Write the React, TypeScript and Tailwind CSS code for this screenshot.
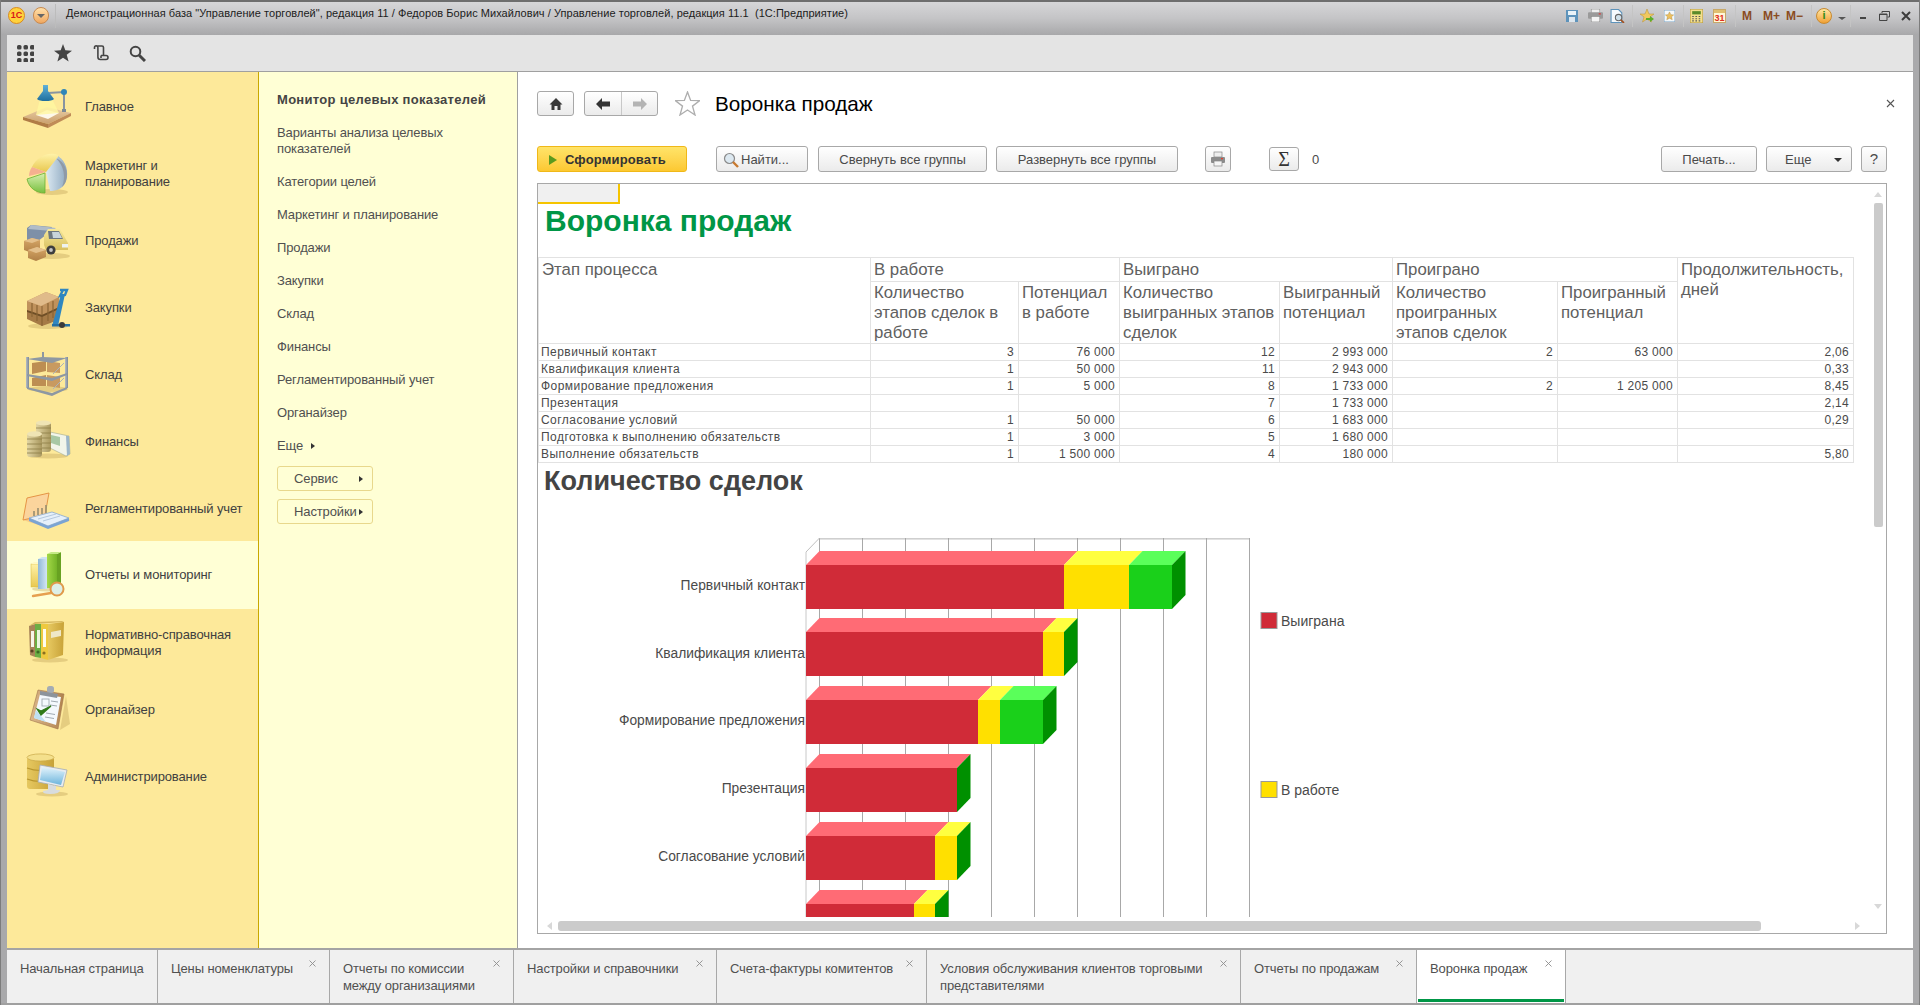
import React from "react";

const F = "font-['Liberation_Sans',Arial,sans-serif]";

function Defs() {
  const g = (id: string, a: string, b: string, h = false) => (
    <linearGradient id={id} x1="0" y1="0" x2={h ? "1" : "0"} y2={h ? "0" : "1"}>
      <stop offset="0" stopColor={a} />
      <stop offset="1" stopColor={b} />
    </linearGradient>
  );
  return (
    <svg width="0" height="0" className="absolute">
      <defs>
        {g("tan", "#ecd0a6", "#c99f6e")}
        {g("blue", "#5fb0d8", "#1f6f9e")}
        {g("blueH", "#8fb8d8", "#d4e6f2", true)}
        {g("pieB", "#dce9f2", "#8ea9c0", true)}
        {g("yel", "#fff2a8", "#e8c850")}
        {g("gold", "#e6c860", "#c8a238", true)}
        {g("grn", "#a4d848", "#74b428", true)}
        {g("pieG", "#d8f0b0", "#78c040", false)}
        {g("steel", "#b4bcc6", "#7d8894", true)}
        {g("box", "#d8a868", "#b08046")}
        {g("scr", "#e4f4fc", "#6cb4dc")}
        {g("coin", "#e2d6a4", "#a8975e", true)}
        {g("wood", "#dcb88c", "#b0824e", true)}
        {g("cab", "#f6e89a", "#d8c060")}
        {g("glass", "#fbf0b0", "#fde99a")}
      </defs>
    </svg>
  );
}

const Ic = ({ children }: { children: React.ReactNode }) => (
  <svg viewBox="0 0 50 48" className="w-[50px] h-[48px] shrink-0">{children}</svg>
);

const Sh = ({ cx, cy, rx, ry }: { cx: number; cy: number; rx: number; ry: number }) => (
  <ellipse cx={cx} cy={cy} rx={rx} ry={ry} fill="#b89c50" opacity="0.35" />
);

const icons: React.ReactNode[] = [
  <Ic key="0">
    <polygon points="1,34 25,24 49,30 26,41" fill="url(#tan)" />
    <polygon points="1,34 26,41 26,45 1,37" fill="#b07c46" />
    <polygon points="49,30 26,41 26,45 49,33" fill="#c08c58" />
    <polygon points="14,32 25,27 37,30 26,36" fill="#fdf8ea" />
    <polygon points="18,16 30,16 37,30 14,32" fill="#fff7a0" opacity="0.8" />
    <path d="M26 10 L42 9 L42 27" stroke="#8894a0" strokeWidth="2" fill="none" />
    <circle cx="42" cy="9" r="3" fill="#2f86b8" />
    <rect x="40" y="26" width="4" height="3" fill="#7e8a94" />
    <path d="M21 2 h5 v6 l6 8 a9 3 0 0 1 -17 0 l6 -8z" fill="url(#blue)" />
  </Ic>,
  <Ic key="1">
    <Sh cx={30} cy={42} rx={16} ry={3} />
    <path d="M24 22 L36 6 C 44 11 47 22 44 31 C 41 39 34 41 28 41 Z" fill="url(#pieB)" />
    <path d="M34 8 C 43 12 47 22 44 31 C 43 34 41 36 40 37 C 44 27 42 16 34 8Z" fill="#8f9aa6" />
    <path d="M24 22 L10 17 C 14 8 26 1 36 5 L 36 7 Z" fill="url(#yel)" />
    <path d="M24 22 L10 17 C 8 20 7 23 7 26 Z" fill="#f5b090" />
    <path d="M5 29 L23 23 L23 43 C 14 43 7 38 5 29 Z" fill="url(#pieG)" stroke="#6ab030" strokeWidth="0.8" />
  </Ic>,
  <Ic key="2">
    <Sh cx={30} cy={39} rx={18} ry={3} />
    <polygon points="5,11 9,8 30,10 28,15 8,30 5,28" fill="#7e90a8" />
    <polygon points="9,8 34,11 30,14 6,12" fill="#b0bcc8" />
    <path d="M22 18 L26 12 H38 L46 26 V33 H24 L22 28z" fill="url(#cab)" />
    <polygon points="26,14 37,14 41,22 27,22" fill="#6d7880" />
    <polygon points="30,15 37,15 40,21 31,21" fill="#c8d4da" />
    <rect x="40" y="27" width="6" height="3.5" fill="#eef2f0" />
    <circle cx="29" cy="33" r="4.6" fill="#3e3e3e" />
    <circle cx="29" cy="33" r="1.9" fill="#c4c4c4" />
    <polygon points="2,24 10,21 18,23 18,32 10,36 2,33" fill="url(#box)" />
    <polygon points="2,24 10,21 18,23 10,26" fill="#e4c08c" />
    <polygon points="6,33 15,30 24,33 24,40 14,44 6,41" fill="url(#box)" />
    <polygon points="6,33 15,30 24,33 14,36" fill="#e4c08c" />
  </Ic>,
  <Ic key="3">
    <Sh cx={26} cy={42} rx={20} ry={3} />
    <polygon points="5,17 24,8 37,13 37,26 20,34 5,27" fill="#c0925c" />
    <polygon points="5,17 24,8 37,13 19,22" fill="#e0bb8a" />
    <polygon points="5,27 19,31 37,24 37,36 20,42 5,35" fill="#a57a46" />
    <polygon points="5,26 20,31 37,23 37,25 20,33 5,28" fill="#6e4e26" />
    <path d="M10 19 v14 M15 21 v16 M26 19 v18 M31 17 v17" stroke="#8a6434" strokeWidth="1.2" />
    <path d="M20 22 v20" stroke="#7a5528" strokeWidth="0.8" />
    <path d="M38 6 H45 L43 11 L38 12 L41 6" fill="none" stroke="#2f86c0" strokeWidth="2.4" />
    <polygon points="39,10 43,10 36,42 30,42" fill="#2f86c0" />
    <rect x="30" y="40" width="18" height="2.5" fill="#2570a4" />
    <circle cx="40" cy="41" r="3" fill="#3a3a3a" />
  </Ic>,
  <Ic key="4">
    <Sh cx={26} cy={38} rx={20} ry={3} />
    <polygon points="10,12 24,10 24,20 10,23" fill="#bd8e52" />
    <polygon points="25,10 38,12 38,22 25,21" fill="#c89a60" />
    <polygon points="10,27 24,24 24,35 10,35" fill="#bd8e52" />
    <polygon points="25,24 38,26 38,37 25,35" fill="#c89a60" />
    <rect x="4" y="6" width="3" height="31" fill="url(#steel)" />
    <rect x="43" y="6" width="3" height="31" fill="url(#steel)" />
    <rect x="20" y="1" width="2" height="6" fill="#8d97a2" />
    <polygon points="5,8 20,6 45,7 30,12" fill="#8e98a2" />
    <polygon points="5,23 30,27 45,22 45,24 30,30 5,25" fill="#8e98a2" />
    <polygon points="5,36 30,42 45,36 45,38 30,45 5,38" fill="#8e98a2" />
    <path d="M31 23 L42 12 M31 38 L42 27" stroke="#aab2ba" strokeWidth="1" />
  </Ic>,
  <Ic key="5">
    <Sh cx={26} cy={38} rx={20} ry={2.5} />
    <polygon points="28,14 47,18 48,36 44,38 28,30" fill="#f2f5ea" stroke="#a0a88c" strokeWidth="0.6" />
    <polygon points="29,17 38,19 38,28 29,25" fill="#a8c8a4" />
    <polygon points="44,18 47,18 48,36 45,38" fill="#9cb6c8" />
    <rect x="14" y="4" width="15" height="30" rx="3" fill="url(#coin)" />
    <path d="M14 10 h15 M14 15 h15 M14 20 h15 M14 25 h15 M14 30 h15" stroke="#8e7e48" strokeWidth="0.8" />
    <ellipse cx="21.5" cy="5" rx="7.5" ry="2.6" fill="#efe4b4" />
    <rect x="5" y="15" width="15" height="24" rx="3" fill="url(#coin)" />
    <path d="M5 21 h15 M5 26 h15 M5 31 h15 M5 35 h15" stroke="#8e7e48" strokeWidth="0.8" />
    <ellipse cx="12.5" cy="16" rx="7.5" ry="2.8" fill="#efe4b4" />
  </Ic>,
  <Ic key="6">
    <polygon points="1,35 24,30 49,35 26,43" fill="#f6c684" opacity="0.9" />
    <polygon points="5,13 27,8 23,30 1,35" fill="#fbd49c" stroke="#e59445" strokeWidth="1" />
    <polygon points="7,33 30,27 47,33 26,41" fill="#e6f0fa" stroke="#88aad0" strokeWidth="0.8" />
    <polygon points="7,33 26,41 47,33 47,36 26,44 7,36" fill="#7aa4d4" />
    <path d="M12 31 v-5 M16 30 v-7 M20 29 v-6 M24 28 v-8" stroke="#9e9272" strokeWidth="1.7" />
    <path d="M16 34 L34 29 M21 36 L38 31" stroke="#b4c8de" strokeWidth="1" />
  </Ic>,
  <Ic key="7">
    <Sh cx={26} cy={38} rx={16} ry={2.5} />
    <rect x="9" y="13" width="8" height="23" fill="url(#yel)" stroke="#d8b840" strokeWidth="0.5" />
    <polygon points="9,13 12,11 20,11 17,13" fill="#fff8c4" />
    <rect x="16" y="8" width="9" height="30" fill="url(#blueH)" />
    <polygon points="16,8 20,6 29,6 25,8" fill="#cfe4f2" />
    <rect x="25" y="3" width="10" height="34" fill="url(#grn)" />
    <polygon points="35,3 39,1 39,33 35,36" fill="#68a222" />
    <polygon points="25,3 29,1 39,1 35,3" fill="#c4ea84" />
    <path d="M29 42 L11 45" stroke="#e6a050" strokeWidth="2.4" strokeLinecap="round" />
    <circle cx="35" cy="38" r="6.5" fill="#dcefe6" stroke="#e09a4a" strokeWidth="2" />
  </Ic>,
  <Ic key="8">
    <Sh cx={28} cy={41} rx={18} ry={2.5} />
    <polygon points="7,7 13,5 13,38 8,36" fill="#a88458" />
    <rect x="9" y="12" width="3" height="16" fill="#f8f6ea" />
    <polygon points="13,5 19,5 19,39 13,38" fill="#6cae44" />
    <rect x="15" y="11" width="3" height="18" fill="#eaf6de" />
    <polygon points="19,5 26,5 26,41 19,39" fill="#eec93f" />
    <rect x="21" y="10" width="3" height="18" fill="#fffdf0" />
    <polygon points="26,5 42,3 41,36 26,41" fill="url(#gold)" />
    <polygon points="7,7 13,5 42,3 40,2 13,3" fill="#d6b860" />
    <polygon points="29,13 39,11 39,17 29,19" fill="#efe8c8" />
    <circle cx="10" cy="32" r="1.6" fill="#5a4020" />
    <circle cx="16" cy="33" r="1.6" fill="#3c6a24" />
    <circle cx="22" cy="34" r="1.6" fill="#8a7020" />
  </Ic>,
  <Ic key="9">
    <polygon points="38,44 44,10 48,38" fill="#b89c50" opacity="0.35" />
    <polygon points="16,4 42,8 36,43 8,34" fill="url(#wood)" stroke="#a0744a" strokeWidth="0.6" />
    <polygon points="18,8 39,11 34,39 12,32" fill="#f4f9fd" />
    <polygon points="12,32 24,36 14,24" fill="#bfe0f2" />
    <rect x="25" y="0" width="7" height="7" rx="2.5" fill="#a4acb4" />
    <polygon points="18,5 36,8 35,12 18,9" fill="#8c949c" />
    <rect x="20" y="13" width="7" height="7" fill="none" stroke="#a0aab2" strokeWidth="0.9" />
    <path d="M29 15 l7 1 M28 19 l7 1 M24 27 l9 1.5 M23 31 l9 1.5" stroke="#a0aab2" strokeWidth="1" />
    <path d="M15 23 L19 29 L29 20 L19 25z" fill="#2f7a18" stroke="#2f7a18" strokeWidth="1.2" />
  </Ic>,
  <Ic key="10">
    <Sh cx={30} cy={41} rx={16} ry={2.5} />
    <rect x="5" y="4" width="27" height="32" rx="3" fill="url(#gold)" />
    <ellipse cx="18.5" cy="4.5" rx="13.5" ry="3.6" fill="#f4e08c" stroke="#c8a848" strokeWidth="0.7" />
    <path d="M5 15 q13 5 27 0 M5 26 q13 5 27 0" stroke="#b8962e" strokeWidth="1.1" fill="none" />
    <polygon points="18,12 45,17 41,34 16,29" fill="#e8ecf0" stroke="#a4acb2" strokeWidth="0.8" />
    <polygon points="20,14 43,19 39,32 18,27" fill="url(#scr)" />
    <path d="M26 31 L34 33 L34 37 H38 Q38 41 28 41 Q20 41 21 38 L26 37z" fill="#d8dcde" />
  </Ic>,
];

const sections: [string, boolean?][] = [
  ["Главное"],
  ["Маркетинг и\nпланирование"],
  ["Продажи"],
  ["Закупки"],
  ["Склад"],
  ["Финансы"],
  ["Регламентированный учет"],
  ["Отчеты и мониторинг", true],
  ["Нормативно-справочная\nинформация"],
  ["Органайзер"],
  ["Администрирование"],
];

const sub = [
  "Варианты анализа целевых\nпоказателей",
  "Категории целей",
  "Маркетинг и планирование",
  "Продажи",
  "Закупки",
  "Склад",
  "Финансы",
  "Регламентированный учет",
  "Органайзер",
];

const Tri = () => <span className="inline-block w-0 h-0 border-y-[3.5px] border-y-transparent border-l-[4px] border-l-[#333]" />;

const btn = "flex items-center justify-center rounded-[3px] border border-[#a8a8a8] bg-linear-to-b from-white to-[#ebebeb] text-[13px] text-[#4a4a4a] shrink-0";

function TitleIcons() {
  const Sep = ({ ml }: { ml: string }) => <span className={"w-px h-[22px] bg-[#c4c4c4] shrink-0 " + ml} />;
  const M = "text-[12px] font-bold text-[#8a4c22] leading-none";
  return (
    <div className="flex items-center h-[27px] absolute left-[1565px] top-0">
      <svg viewBox="0 0 12 12" className="w-[12px] h-[12px]"><rect width="12" height="12" fill="#5d93bb" /><rect x="2" y="1" width="8" height="4" fill="#e8f2f8" /><rect x="3" y="7" width="6" height="5" fill="#dce6ee" /></svg>
      <svg viewBox="0 0 14 12" className="w-[15px] h-[13px] ml-[10px]"><rect x="3" width="8" height="4" fill="#eee" stroke="#888" strokeWidth=".5" /><rect y="3" width="14" height="6" rx="1" fill="#9a9a9a" /><rect x="3" y="7" width="8" height="5" fill="#f4f4f4" stroke="#888" strokeWidth=".5" /><rect x="10" y="4" width="2" height="1" fill="#e03030" /></svg>
      <svg viewBox="0 0 14 13" className="w-[15px] h-[14px] ml-[7px]"><path d="M1 .5 h7 l3 3 v9 H1z" fill="#f6fafd" stroke="#5d93bb" /><circle cx="8" cy="8" r="3" fill="#cfe0ea" stroke="#666" /><path d="M10 10 l3 3" stroke="#a05020" strokeWidth="1.6" /></svg>
      <Sep ml="ml-[7px]" />
      <svg viewBox="0 0 14 14" className="w-[14px] h-[14px] ml-[7px]"><polygon points="7,0 9,5 14,5 10,8 11.5,13 7,10 2.5,13 4,8 0,5 5,5" fill="#f0c860" stroke="#b89030" strokeWidth=".5" /><path d="M6 9 h4 v-2 l4 3 -4 3 v-2 H6z" fill="#5cae28" /></svg>
      <svg viewBox="0 0 12 13" className="w-[11px] h-[12px] ml-[10px]"><rect width="12" height="13" fill="#f4f8fb" stroke="#7aa4c4" /><polygon points="6,2 7.5,5 10.5,5.3 8.2,7.4 9,10.5 6,9 3,10.5 3.8,7.4 1.5,5.3 4.5,5" fill="#ecc060" stroke="#a07a28" strokeWidth=".4" /></svg>
      <Sep ml="ml-[8px]" />
      <svg viewBox="0 0 12 13" className="w-[13px] h-[14px] ml-[6px]"><rect width="12" height="13" fill="#f4e08c" stroke="#b89a40" /><rect x="2" y="2" width="8" height="3" fill="#5a8a2a" /><path d="M2 7 h1.5 M5 7 h1.5 M8 7 h1.5 M2 9 h1.5 M5 9 h1.5 M8 9 h1.5 M2 11 h1.5 M5 11 h1.5 M8 11 h1.5" stroke="#5a5a5a" strokeWidth="1" /></svg>
      <span className="relative w-[13px] h-[14px] ml-[10px] border border-[#c8a868] bg-[#fff8d8] text-[9px] leading-[16px] text-center text-[#e03020] font-bold"><span className="absolute inset-x-0 top-0 h-[3px] bg-[#e0c070]" />31</span>
      <Sep ml="ml-[9px]" />
      <span className={M + " ml-[6px]"}>M</span>
      <span className={M + " ml-[11px]"}>M+</span>
      <span className={M + " ml-[6px]"}>M−</span>
      <Sep ml="ml-[8px]" />
      <span className="ml-[4px] w-[16px] h-[16px] rounded-full bg-linear-to-b from-[#ffe7a0] to-[#f0a030] border border-[#c88a30] flex items-center justify-center text-[11px] font-bold text-[#2f8a18] leading-none">i</span>
      <span className="w-0 h-0 border-x-[4px] border-x-transparent border-t-[3px] border-t-[#555] mt-[6px] ml-[6px]" />
      <Sep ml="ml-[4px]" />
      <span className="w-[6px] h-[2px] bg-[#444] mt-[5px] ml-[9px]" />
      <svg viewBox="0 0 11 10" className="w-[11px] h-[10px] ml-[13px]"><path d="M3 2 V.5 H10.5 V6 H8.5 M.5 3 H8 V9.5 H.5z M.5 3.5 H8" fill="none" stroke="#444" /></svg>
      <svg viewBox="0 0 10 10" className="w-[10px] h-[10px] ml-[11px]"><path d="M1 1 L9 9 M9 1 L1 9" stroke="#3c3c3c" strokeWidth="2" /></svg>
    </div>
  );
}

const rows: (string | number)[][] = [
  ["Первичный контакт", 3, "76 000", 12, "2 993 000", 2, "63 000", "2,06"],
  ["Квалификация клиента", 1, "50 000", 11, "2 943 000", "", "", "0,33"],
  ["Формирование предложения", 1, "5 000", 8, "1 733 000", 2, "1 205 000", "8,45"],
  ["Презентация", "", "", 7, "1 733 000", "", "", "2,14"],
  ["Согласование условий", 1, "50 000", 6, "1 683 000", "", "", "0,29"],
  ["Подготовка к выполнению обязательств", 1, "3 000", 5, "1 680 000", "", "", ""],
  ["Выполнение обязательств", 1, "1 500 000", 4, "180 000", "", "", "5,80"],
];

const th = "border border-[#e2e2e2] align-top font-normal text-left pl-[3px] pr-[1px] text-[16.8px] leading-[20px] text-[#606060] overflow-hidden whitespace-pre-line";

function Table() {
  return (
    <table className="table-fixed border-collapse w-[1315px] shrink-0">
      <colgroup>
        {[332, 148, 101, 160, 113, 165, 120, 176].map((w, i) => <col key={i} style={{ width: w }} />)}
      </colgroup>
      <thead>
        <tr className="h-[24px]">
          <th rowSpan={2} className={th + " pt-[2px]"}>Этап процесса</th>
          <th colSpan={2} className={th + " pt-[2px]"}>В работе</th>
          <th colSpan={2} className={th + " pt-[2px]"}>Выиграно</th>
          <th colSpan={2} className={th + " pt-[2px]"}>Проиграно</th>
          <th rowSpan={2} className={th + " pt-[2px]"}>{"Продолжительность,\nдней"}</th>
        </tr>
        <tr className="h-[62px]">
          <th className={th + " pt-[1px]"}>{"Количество\nэтапов сделок в\nработе"}</th>
          <th className={th + " pt-[1px]"}>{"Потенциал\nв работе"}</th>
          <th className={th + " pt-[1px]"}>{"Количество\nвыигранных этапов\nсделок"}</th>
          <th className={th + " pt-[1px]"}>{"Выигранный\nпотенциал"}</th>
          <th className={th + " pt-[1px]"}>{"Количество\nпроигранных\nэтапов сделок"}</th>
          <th className={th + " pt-[1px]"}>{"Проигранный\nпотенциал"}</th>
        </tr>
      </thead>
      <tbody>
        {rows.map((r, i) => (
          <tr key={i} className="h-[17px]">
            {r.map((c, j) => (
              <td key={j} className={"border border-[#e2e2e2] p-0 text-[12px] leading-[14px] text-[#4a4a4a] whitespace-nowrap " + (j === 0 ? "pl-[2px] text-left tracking-[0.45px]" : "pr-[4px] text-right tracking-[0.3px]")}>{c}</td>
            ))}
          </tr>
        ))}
      </tbody>
    </table>
  );
}

const R: [string, string] = ["#d02b38", "#ff6b75"];
const Y: [string, string] = ["#ffe000", "#ffff40"];
const G: [string, string] = ["#1ad01a", "#5aff5a"];

const bars: { y: number; segs: [number, [string, string]][] }[] = [
  { y: 565, segs: [[1064, R], [1129, Y], [1172, G]] },
  { y: 632, segs: [[1043, R], [1064, Y]] },
  { y: 700, segs: [[978, R], [1000, Y], [1043, G]] },
  { y: 768, segs: [[957, R]] },
  { y: 836, segs: [[935, R], [957, Y]] },
  { y: 904, segs: [[914, R], [935, Y]] },
];

function Chart() {
  const dx = 13.5, dy = 14, L = 806, H = 44;
  const labels: [string, number][] = [["Первичный контакт", 585], ["Квалификация клиента", 653], ["Формирование предложения", 720], ["Презентация", 788], ["Согласование условий", 856]];
  return (
    <svg viewBox="538 501 1330 416" className="w-[1330px] h-[416px] shrink-0 block">
      <rect x="819.5" y="538.5" width="430" height="0.8" fill="#a0a0a0" />
      {Array.from({ length: 11 }, (_, i) => (
        <line key={i} x1={819.5 + 43 * i} y1="538" x2={819.5 + 43 * i} y2="917" stroke="#a8a8a8" strokeWidth="1" />
      ))}
      <line x1="806" y1="552" x2="806" y2="917" stroke="#c8c8c8" />
      <line x1="806" y1="552" x2="819.5" y2="538" stroke="#c0c0c0" />
      {bars.map((b, i) => {
        let x = L;
        const bottom = b.y + H;
        const end = b.segs[b.segs.length - 1][0];
        return (
          <g key={i}>
            {b.segs.map(([e, c], k) => {
              const s = x; x = e;
              return (
                <g key={k}>
                  <rect x={s} y={b.y} width={e - s} height={H} fill={c[0]} />
                  <polygon points={`${s},${b.y} ${e},${b.y} ${e + dx},${b.y - dy} ${s + dx},${b.y - dy}`} fill={c[1]} />
                </g>
              );
            })}
            <polygon points={`${end},${b.y} ${end + dx},${b.y - dy} ${end + dx},${bottom - dy} ${end},${bottom}`} fill="#009000" />
          </g>
        );
      })}
      {labels.map(([t, y]) => (
        <text key={t} x="805" y={y + 5} textAnchor="end" fontSize="13.8" fill="#4a4a4a" fontFamily="Liberation Sans">{t}</text>
      ))}
      <rect x="1261" y="612.5" width="16" height="16" fill="#d02b38" stroke="#999" />
      <text x="1281" y="626" fontSize="14" fill="#4a4a4a" fontFamily="Liberation Sans">Выиграна</text>
      <rect x="1261" y="781.5" width="16" height="16" fill="#ffe000" stroke="#999" />
      <text x="1281" y="795" fontSize="14" fill="#4a4a4a" fontFamily="Liberation Sans">В работе</text>
    </svg>
  );
}

const tabs: [string, number, boolean, boolean?][] = [
  ["Начальная страница", 151, false],
  ["Цены номенклатуры", 172, true],
  ["Отчеты по комиссии\nмежду организациями", 184, true],
  ["Настройки и справочники", 203, true],
  ["Счета-фактуры комитентов", 210, true],
  ["Условия обслуживания клиентов торговыми\nпредставителями", 314, true],
  ["Отчеты по продажам", 176, true],
  ["Воронка продаж", 149, true, true],
];

const txt = "text-[13px] leading-[16px] tracking-[-0.12px]";

export default function App() {
  return (
    <div className={"w-[1920px] h-[1005px] overflow-hidden bg-[#a9a9ab] flex flex-col relative border-x border-[#7c7c7c] " + F}>
      <Defs />
      <div className="relative h-[35px] shrink-0 border-t-2 border-[#6e6e6e] bg-linear-to-b from-[#d6d6d8] via-[#c4c4c6] to-[#a8a8aa] flex items-center">
        <span className="absolute left-[7px] top-[5px] w-[17px] h-[17px] rounded-full bg-[#ffd23c] border border-[#d88a20] flex items-center justify-center text-[9px] font-bold text-[#d81818] leading-none">1С</span>
        <span className="absolute left-[32px] top-[5px] w-[16px] h-[17px] rounded-full bg-linear-to-b from-[#ffe0a8] to-[#f0a860] border border-[#c88a50] flex items-center justify-center">
          <span className="w-0 h-0 border-x-[4px] border-x-transparent border-t-[4px] border-t-[#666]" />
        </span>
        <span className="absolute left-[54px] top-[2px] w-px h-[24px] bg-[#bcbcbc]" />
        <span className="absolute left-[65px] top-[2px] text-[11px] tracking-[0.05px] leading-[18px] text-[#1c1c1c] whitespace-pre">Демонстрационная база "Управление торговлей", редакция 11 / Федоров Борис Михайлович / Управление торговлей, редакция 11.1  (1С:Предприятие)</span>
        <TitleIcons />
      </div>
      <div className="flex-1 mx-[6px] min-h-0 flex flex-col">
        <div className="h-[37px] shrink-0 bg-[#e4e4e4] border-b border-[#a0a0a0] flex items-center pl-[10px]">
          <svg viewBox="0 0 17 17" className="w-[17px] h-[17px] mr-[20px]">
            {[0, 6.5, 13].flatMap((x) => [0, 6.5, 13].map((y) => <rect key={x + "-" + y} x={x} y={y} width="4.5" height="4.5" rx="1.6" fill="#444" />))}
          </svg>
          <svg viewBox="0 0 17 17" className="w-[18px] h-[18px] mr-[20px]"><polygon points="8.5,0 10.7,6 17,6.3 12,10.2 13.8,16.5 8.5,13 3.2,16.5 5,10.2 0,6.3 6.3,6" fill="#444" /></svg>
          <svg viewBox="0 0 17 17" className="w-[17px] h-[17px] mr-[20px]"><path d="M2.5 4 V2.5 a1.7 1.7 0 0 1 3.4 0 V12 a2.5 2.5 0 0 0 2.5 2.5 H14 a2 2 0 0 0 0 -4 H9 M3 1 H10 a1.5 1.5 0 0 1 1.5 1.5 V10 M9 10.5 V13" fill="none" stroke="#444" strokeWidth="1.6" /></svg>
          <svg viewBox="0 0 17 17" className="w-[17px] h-[17px]"><circle cx="6.5" cy="6.5" r="4.8" fill="none" stroke="#444" strokeWidth="2" /><path d="M10.2 10.2 L16 16" stroke="#444" strokeWidth="3" /></svg>
        </div>
        <div className="flex-1 min-h-0 flex">
          <div className="w-[252px] shrink-0 bg-[#fde99a] border-r border-[#c9a800] pt-[1px]">
            {sections.map(([t, active], i) => (
              <div key={i} className={"flex items-center pl-[15px] gap-[13px] text-[#404040] whitespace-pre-line " + txt + " " + (active ? "bg-[#ffffd5] h-[68px] -mt-px" : "h-[67px]")}>
                {icons[i]}
                <span>{t}</span>
              </div>
            ))}
          </div>
          <div className={"w-[259px] shrink-0 bg-[#ffffd5] border-r border-[#a0a0a0] pl-[18px] pt-[11px] text-[#505050] " + txt}>
            <div className="pt-[9px] h-[33px] font-bold text-[#444] tracking-[0.3px]">Монитор целевых показателей</div>
            {sub.map((t, i) => <div key={i} className="py-[8.5px] whitespace-pre-line">{t}</div>)}
            <div className="py-[8.5px] flex items-center gap-[8px]">Еще <Tri /></div>
            <div className="mt-[4px] w-[96px] h-[25px] rounded-[3px] border border-[#e8d88c] flex items-center justify-between pl-[16px] pr-[9px]">Сервис <Tri /></div>
            <div className="mt-[8px] w-[96px] h-[25px] rounded-[3px] border border-[#e8d88c] flex items-center justify-between pl-[16px] pr-[9px]">Настройки <Tri /></div>
          </div>
          <div className="flex-1 min-w-0 bg-white pl-[19px] pt-[19px] relative">
            <div className="h-[25px] flex items-center">
              <div className={btn + " w-[37px] h-[25px]"}>
                <svg viewBox="0 0 14 14" className="w-[14px] h-[14px]"><path d="M7 1 L0.5 7.5 H2.5 V13 H5.5 V9 H8.5 V13 H11.5 V7.5 H13.5z" fill="#3a3a3a" /></svg>
              </div>
              <div className={btn + " w-[74px] h-[25px] ml-[10px] !justify-start"}>
                <div className="w-[37px] h-full flex items-center justify-center border-r border-[#c8c8c8]">
                  <svg viewBox="0 0 14 12" className="w-[14px] h-[12px]"><path d="M0 6 L6 0 V3.5 H14 V8.5 H6 V12z" fill="#333" /></svg>
                </div>
                <div className="flex-1 flex items-center justify-center">
                  <svg viewBox="0 0 14 12" className="w-[14px] h-[12px]"><path d="M14 6 L8 0 V3.5 H0 V8.5 H8 V12z" fill="#b4b4b4" /></svg>
                </div>
              </div>
              <svg viewBox="0 0 24 24" className="w-[25px] h-[25px] ml-[17px]"><polygon points="12,1 15,9 23.5,9.3 16.8,14.5 19.2,23 12,18.2 4.8,23 7.2,14.5 0.5,9.3 9,9" fill="#fff" stroke="#aeaeae" strokeWidth="1.3" /></svg>
              <span className="ml-[15px] text-[20.7px] leading-[27px] text-black">Воронка продаж</span>
              <svg viewBox="0 0 9 9" className="absolute right-[18px] top-[27px] w-[9px] h-[9px]"><path d="M1 1 L8 8 M8 1 L1 8" stroke="#555" strokeWidth="1.1" /></svg>
            </div>
            <div className="mt-[30px] h-[26px] flex items-center text-[13px]">
              <div className="w-[150px] h-[26px] rounded-[3px] border border-[#f0b818] bg-linear-to-b from-[#ffe468] to-[#fcc830] flex items-center pl-[11px] pt-px font-bold text-[#333] text-[13px] tracking-[0.15px] shrink-0">
                <span className="w-0 h-0 border-y-[5px] border-y-transparent border-l-[8px] border-l-[#5a9a1e] mr-[8px]" />Сформировать
              </div>
              <div className={btn + " w-[92px] h-[26px] ml-[29px] !justify-start pl-[6px] pt-px"}>
                <svg viewBox="0 0 16 16" className="w-[16px] h-[16px] mr-[2px]"><circle cx="6.5" cy="6.5" r="5" fill="#dce8f0" stroke="#8a8a8a" strokeWidth="1.2" /><path d="M10 10 L15 15" stroke="#c87a30" strokeWidth="2.4" /></svg>
                Найти...
              </div>
              <div className={btn + " w-[169px] h-[26px] ml-[10px] pt-px"}>Свернуть все группы</div>
              <div className={btn + " w-[182px] h-[26px] ml-[9px] pt-px"}>Развернуть все группы</div>
              <div className={btn + " w-[26px] h-[26px] ml-[27px]"}>
                <svg viewBox="0 0 16 16" className="w-[16px] h-[16px]"><rect x="4" y="1" width="8" height="5" fill="#eee" stroke="#888" strokeWidth=".7" /><rect x="1" y="6" width="14" height="6" rx="1" fill="#8c8c8c" /><rect x="4" y="10" width="8" height="5" fill="#f6f6f6" stroke="#888" strokeWidth=".7" /><rect x="11" y="7" width="2" height="1.3" fill="#e04030" /></svg>
              </div>
              <div className={btn + " w-[30px] h-[24px] ml-[38px] !text-[20px] !text-[#333] font-['Liberation_Serif',serif]"}>Σ</div>
              <span className="ml-[13px] pt-px text-[13px] text-[#4a4a4a]">0</span>
              <div className="flex-1" />
              <div className={btn + " w-[96px] h-[26px] pt-px"}>Печать...</div>
              <div className={btn + " w-[86px] h-[26px] ml-[9px] !justify-start pl-[18px] pt-px"}>Еще<span className="ml-[23px] w-0 h-0 border-x-[4px] border-x-transparent border-t-[4px] border-t-[#333]" /></div>
              <div className={btn + " w-[26px] h-[26px] ml-[9px] mr-[26px] !text-[15px]"}>?</div>
            </div>
            <div className="mt-[11px] mr-[26px] h-[751px] border border-[#a8a8a8] relative overflow-hidden flex flex-col">
              <div className="w-[82px] h-[20px] shrink-0 bg-[#f0f0f0] border-r-2 border-b-2 border-[#f5c400]" />
              <div className="h-[53px] shrink-0 pl-[7px] text-[30px] leading-[34px] font-bold text-[#009646]">Воронка продаж</div>
              <Table />
              <div className="h-[38px] shrink-0 pl-[6px] text-[27px] leading-[36px] font-bold text-[#444]">Количество сделок</div>
              <Chart />
              <div className="absolute left-[1336px] top-[19px] w-[9px] h-[324px] bg-[#cbcbcb] rounded-[2px]" />
              <div className="absolute left-[20px] top-[737px] w-[1203px] h-[10px] bg-[#cbcbcb] rounded-[3px]" />
              <span className="absolute left-[1336px] top-[8px] w-0 h-0 border-x-[4px] border-x-transparent border-b-[5px] border-b-[#d8d8d8]" />
              <span className="absolute left-[1336px] top-[720px] w-0 h-0 border-x-[4px] border-x-transparent border-t-[5px] border-t-[#d8d8d8]" />
              <span className="absolute left-[9px] top-[738px] w-0 h-0 border-y-[4px] border-y-transparent border-r-[5px] border-r-[#d8d8d8]" />
              <span className="absolute left-[1317px] top-[738px] w-0 h-0 border-y-[4px] border-y-transparent border-l-[5px] border-l-[#d8d8d8]" />
            </div>
          </div>
        </div>
        <div className="h-[55px] shrink-0 bg-[#f0f0f0] border-t-2 border-[#a4a4a4] flex">
          {tabs.map(([t, w, close, active], i) => (
            <div key={i} style={{ width: w }} className={"relative shrink-0 h-full border-r border-[#a8a8a8] pl-[13px] pt-[10px] text-[13px] leading-[17px] tracking-[-0.12px] text-[#505050] whitespace-pre-line " + (active ? "bg-white" : "")}>
              {t}
              {close && <svg viewBox="0 0 7 7" className="absolute right-[13px] top-[10px] w-[7px] h-[7px]"><path d="M.5 .5 L6.5 6.5 M6.5 .5 L.5 6.5" stroke="#8c8c8c" strokeWidth=".9" /></svg>}
              {active && <span className="absolute left-px right-px bottom-[1px] h-[3px] bg-[#009646]" />}
            </div>
          ))}
        </div>
      </div>
      <div className="h-[2px] shrink-0 bg-[#a0a0a0]" />
    </div>
  );
}
